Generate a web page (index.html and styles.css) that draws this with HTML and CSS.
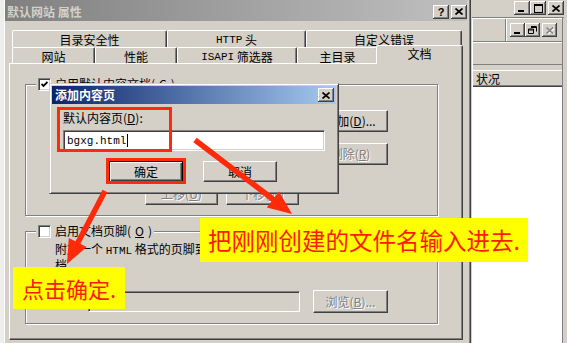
FILE: index.html
```html
<!DOCTYPE html>
<html lang="zh-CN">
<head>
<meta charset="UTF-8">
<meta name="viewport" content="width=device-width, initial-scale=1.0">
<title>默认网站 属性</title>
<link rel="stylesheet" href="styles.css">
</head>
<body>

<div class="desk">
    <div class="edge"></div>

    <div class="win">
        <div class="title">
            <span class="title-text">默认网站 属性</span>
            <span class="cap help">?</span>
            <span class="cap close"><svg width="8" height="7" viewBox="0 0 8 7"><path d="M0.5 0.5L7.5 6.5M7.5 0.5L0.5 6.5" stroke="#000" stroke-width="1.7"/></svg></span>
        </div>

        <div class="tabs">
            <div class="tab-row back">
                <div class="tab tab-sec">目录安全性</div>
                <div class="tab tab-http"><span class="m">HTTP</span>&nbsp;头</div>
                <div class="tab tab-err">自定义错误</div>
            </div>
            <div class="tab-row front">
                <div class="tab tab-site">网站</div>
                <div class="tab tab-perf">性能</div>
                <div class="tab tab-isapi"><span class="m">ISAPI</span>&nbsp;筛选器</div>
                <div class="tab tab-home">主目录</div>
                <div class="tab tab-doc on">文档</div>
            </div>
        </div>

        <div class="panel">
            <div class="group g1">
                <div class="legend">
                    <span class="check"><svg width="7" height="7" viewBox="0 0 7 7"><path d="M0.5 3L2.5 5L6.5 1" fill="none" stroke="#000" stroke-width="1.8"/></svg></span>
                    启用默认内容文档(<u>C</u>)
                </div>
                <div class="doc-row">
                    <div class="list">
                        <div>Default.htm</div>
                        <div>Default.asp</div>
                        <div>index.htm</div>
                        <div>iisstart.htm</div>
                    </div>
                    <div class="side">
                        <button class="btn">添加(<u>D</u>)...</button>
                        <button class="btn" disabled>删除(<u>R</u>)</button>
                    </div>
                </div>
                <div class="move">
                    <button class="btn" disabled>上移(<u>U</u>)</button>
                    <button class="btn" disabled>下移(<u>W</u>)</button>
                </div>
            </div>

            <div class="group g2">
                <div class="legend"><span class="check"></span>启用文档页脚(<u>O</u>)</div>
                <p class="foot-text">附加一个 <span class="m">HTML</span> 格式的页脚到您的 <span class="m">Web</span> 服务器返回的每一个文<br>档。</p>
                <div class="foot-row">
                    <div class="field off"></div>
                    <button class="btn" disabled>浏览(<u>B</u>)...</button>
                </div>
            </div>
        </div>
    </div>

    <div class="mmc">
        <div class="mmc-cap">
            <span class="cap"><span class="g-min"></span></span>
            <span class="cap"><span class="g-max"></span></span>
            <span class="cap close"><svg width="8" height="7" viewBox="0 0 8 7"><path d="M0.5 0.5L7.5 6.5M7.5 0.5L0.5 6.5" stroke="#000" stroke-width="1.7"/></svg></span>
        </div>
        <div class="mmc-body">
            <div class="mmc-menu">
                <div class="mmc-menu-left"></div>
                <div class="mdi">
                    <span class="cap small"><span class="g-min"></span></span>
                    <span class="cap small"><svg width="9" height="8" viewBox="0 0 9 8"><path d="M3 0.5H8.5V5.5M3 1.5H8.5" fill="none" stroke="#000"/><path d="M0.5 3H5.5V7.5H0.5Z M0.5 4H5.5" fill="none" stroke="#000"/></svg></span>
                    <span class="cap small close off"><svg width="8" height="7" viewBox="0 0 8 7"><path d="M1.5 1.5L8 7.5M8 1.5L1.5 7.5" stroke="#fff" stroke-width="1.5"/><path d="M0.5 0.5L7 6.5M7 0.5L0.5 6.5" stroke="#808080" stroke-width="1.5"/></svg></span>
                </div>
            </div>
            <div class="mmc-tool"></div>
            <div class="mmc-head">状况</div>
            <div class="mmc-list"></div>
        </div>
    </div>
</div>

<div class="dlg">
    <div class="dlg-title">
        <span class="dlg-name">添加内容页</span>
        <span class="cap"><svg width="8" height="7" viewBox="0 0 8 7"><path d="M0.5 0.5L7.5 6.5M7.5 0.5L0.5 6.5" stroke="#000" stroke-width="1.7"/></svg></span>
    </div>
    <div class="dlg-body">
        <div class="dlg-label">默认内容页(<u>D</u>):</div>
        <div class="field"><span class="m">bgxg.html</span><span class="caret"></span></div>
        <div class="dlg-btns">
            <button class="btn def">确定</button>
            <button class="btn">取消</button>
        </div>
    </div>
</div>

<div class="redbox rb-field"></div>
<div class="redbox rb-ok"></div>

<svg class="arrows" width="567" height="343" viewBox="0 0 567 343">
    <line x1="195" y1="140" x2="274" y2="200" stroke="#ff2a0a" stroke-width="5.5"/>
    <polygon points="292,214 266.8,207.5 279,191.5" fill="#ff2a0a"/>
    <line x1="105" y1="191" x2="77.7" y2="243" stroke="#ff2a0a" stroke-width="5.5"/>
    <polygon points="67,264 68.8,238 86.7,247" fill="#ff2a0a"/>
</svg>

<div class="note note-ok">点击确定.</div>
<div class="note note-name">把刚刚创建的文件名输入进去.</div>

</body>
</html>
```

FILE: styles.css
```css
*{
    box-sizing: border-box;
}
body{
    margin: 0;
    width: 567px;
    height: 343px;
    overflow: hidden;
    position: relative;
    background-color: #d4d0c8;
    font-family: "Noto Sans CJK SC", sans-serif;
    font-size: 12px;
    line-height: 14px;
    color: #000;
}
u{
    text-decoration-thickness: 1px;
}
.m{
    font-family: "Liberation Mono", "Noto Sans CJK SC", monospace;
    font-size: 11px;
}
.desk{
    display: flex;
    height: 343px;
}
.edge{
    width: 4px;
    background-color: #eeeeec;
}

/* properties window */
.win{
    width: 467px;
    padding: 0 4px 0 1px;
    box-shadow: inset 1px 0 #fff, inset -1px 0 #404040, inset -2px 0 #808080;
}
.title{
    height: 21px;
    display: flex;
    align-items: center;
    padding: 2px 0 0 2px;
    background: linear-gradient(to right, #808080, #c0c0c0);
    color: #d4d0c8;
    font-weight: bold;
}
.title-text{
    flex: 1;
}
.cap{
    width: 16px;
    height: 14px;
    display: flex;
    align-items: center;
    justify-content: center;
    background-color: #d4d0c8;
    box-shadow: inset -1px -1px #404040, inset 1px 1px #fff, inset -2px -2px #808080;
}
.help{
    font-family: "Liberation Sans", sans-serif;
    font-size: 11px;
    font-weight: bold;
    color: #000;
    padding-top: 1px;
}
.close{
    margin-left: 2px;
}
.g-min{
    width: 6px;
    height: 2px;
    background-color: #000;
    margin-top: 6px;
    margin-right: 2px;
}
.g-max{
    width: 9px;
    height: 9px;
    border: 1px solid #000;
    border-top-width: 2px;
}

/* tabs */
.tabs{
    margin: 9px 0 0 7px;
    width: 450px;
}
.tab-row{
    display: flex;
}
.tab{
    display: flex;
    align-items: center;
    justify-content: center;
    border-top: 1px solid #fff;
    border-left: 1px solid #fff;
    border-right: 1px solid #404040;
    border-radius: 2px 2px 0 0;
    box-shadow: inset -1px 0 #808080;
    padding-top: 2px;
    white-space: nowrap;
}
.back .tab{
    height: 17px;
}
.front .tab{
    height: 16px;
}
.tab-sec{ width: 155px; }
.tab-http{ width: 139px; }
.tab-err{ width: 156px; }
.tab-site{ width: 83px; }
.tab-perf{ width: 82px; }
.tab-isapi{ width: 120px; }
.tab-home{ width: 81px; }
.tab-doc{ width: 84px; }
.tab.on{
    width: 87px;
    height: 19px;
    margin: -2px -1px -1px -2px;
    padding: 0 0 2px 0;
    position: relative;
    z-index: 1;
    background-color: #d4d0c8;
}

.panel{
    margin-left: 4px;
    width: 454px;
    height: 277px;
    padding-left: 15px;
    border-top: 1px solid #fff;
    border-left: 1px solid #fff;
    border-right: 1px solid #404040;
    border-bottom: 1px solid #404040;
    box-shadow: inset -1px -1px #808080;
}
.group{
    width: 413px;
    border: 1px solid #808080;
    box-shadow: inset 1px 1px #fff, 1px 1px #fff;
}
.g1{
    margin-top: 20px;
    height: 132px;
}
.g2{
    margin-top: 15px;
    height: 93px;
}
.legend{
    display: flex;
    align-items: center;
    gap: 4px;
    width: fit-content;
    height: 14px;
    margin: -8px 0 0 10px;
    padding: 0 2px;
    background-color: #d4d0c8;
}
.check{
    width: 13px;
    height: 13px;
    display: flex;
    align-items: center;
    justify-content: center;
    background-color: #fff;
    border: 1px solid;
    border-color: #808080 #fff #fff #808080;
    box-shadow: inset 1px 1px #404040, inset -1px -1px #d4d0c8;
}
.doc-row{
    display: flex;
    margin: 9px 0 0 24px;
}
.list{
    width: 250px;
    height: 75px;
    padding: 3px 4px;
    background-color: #fff;
    border: 1px solid;
    border-color: #808080 #fff #fff #808080;
    box-shadow: inset 1px 1px #404040, inset -1px -1px #d4d0c8;
}
.side{
    display: flex;
    flex-direction: column;
    gap: 11px;
    margin-left: 13px;
    padding-top: 10px;
}
.side .btn{
    height: 22px;
}
.move{
    display: flex;
    gap: 8px;
    margin: 7px 0 0 119px;
}
.move .btn{
    width: 73px;
}
.foot-text{
    margin: 4px 0 0 29px;
    line-height: 13px;
    white-space: nowrap;
}
.foot-row{
    display: flex;
    align-items: center;
    margin: 19px 0 0 62px;
}
.foot-row .btn{
    margin-left: 13px;
}

/* buttons and fields */
.btn{
    width: 75px;
    height: 23px;
    padding: 0;
    font: inherit;
    color: #000;
    background-color: #d4d0c8;
    border: 1px solid;
    border-color: #fff #404040 #404040 #fff;
    box-shadow: inset -1px -1px #808080;
}
.btn:disabled{
    color: #808080;
    text-shadow: 1px 1px #fff;
}
.btn.def{
    border-color: #000;
    box-shadow: inset 1px 1px #fff, inset -1px -1px #404040, inset -2px -2px #808080;
}
.field{
    display: flex;
    align-items: center;
    height: 21px;
    padding-left: 3px;
    background-color: #fff;
    border: 1px solid;
    border-color: #808080 #fff #fff #808080;
    box-shadow: inset 1px 1px #404040, inset -1px -1px #d4d0c8;
}
.field.off{
    width: 212px;
    background-color: #d4d0c8;
}
.caret{
    width: 1px;
    height: 13px;
    margin-left: 1px;
    background-color: #000;
}

/* console window behind */
.mmc{
    flex: 1;
    display: flex;
    flex-direction: column;
    padding: 0 4px 0 1px;
}
.mmc-cap{
    height: 18px;
    display: flex;
    justify-content: flex-end;
    align-items: flex-start;
    padding-top: 1px;
    margin-right: -1px;
    border-bottom: 1px solid #808080;
}
.mmc-body{
    flex: 1;
    display: flex;
    flex-direction: column;
    border-left: 1px solid #fff;
    border-right: 1px solid #808080;
}
.mmc-menu{
    height: 24px;
    display: flex;
    border-top: 1px solid #fff;
    border-bottom: 1px solid #808080;
}
.mmc-menu-left{
    width: 33px;
    border-right: 1px solid #808080;
    box-shadow: 1px 0 #fff;
}
.mdi{
    display: flex;
    margin: 4px 0 0 4px;
}
.cap.small{
    width: 15px;
}
.mmc-tool{
    height: 23px;
    border-top: 1px solid #fff;
    border-bottom: 1px solid #808080;
    margin-bottom: 5px;
}
.mmc-head{
    height: 17px;
    padding: 1px 0 0 3px;
    border-top: 1px solid #fff;
    border-bottom: 1px solid #404040;
    box-shadow: inset 0 -1px #808080;
}
.mmc-list{
    flex: 1;
    background-color: #fff;
}

/* dialog */
.dlg{
    position: absolute;
    left: 49px;
    top: 83px;
    width: 290px;
    height: 111px;
    padding: 2px;
    background-color: #d4d0c8;
    border: 1px solid;
    border-color: #d4d0c8 #404040 #404040 #d4d0c8;
    box-shadow: inset 1px 1px #fff, inset -1px -1px #808080;
}
.dlg-title{
    height: 18px;
    display: flex;
    align-items: center;
    padding: 0 2px 0 3px;
    background: linear-gradient(to right, #0a246a, #a6caf0);
    color: #fff;
    font-weight: bold;
}
.dlg-name{
    flex: 1;
}
.dlg-body{
    padding: 7px 0 0 11px;
}
.dlg-body .field{
    width: 262px;
    margin-top: 5px;
}
.dlg-btns{
    display: flex;
    gap: 20px;
    margin: 10px 0 0 46px;
}
.dlg-btns .btn{
    width: 74px;
    height: 21px;
}

/* annotations */
.redbox{
    position: absolute;
    border: 3px solid #ff2a0a;
}
.rb-field{
    left: 57px;
    top: 107px;
    width: 115px;
    height: 45px;
}
.rb-ok{
    left: 106px;
    top: 158px;
    width: 80px;
    height: 26px;
}
.arrows{
    position: absolute;
    left: 0;
    top: 0;
}
.note{
    position: absolute;
    display: flex;
    align-items: center;
    background-color: #ffff00;
    color: #ff1a00;
    white-space: nowrap;
}
.note-ok{
    left: 13px;
    top: 267px;
    width: 112px;
    height: 42px;
    padding-left: 9px;
    font-size: 22px;
}
.note-name{
    left: 200px;
    top: 218px;
    width: 328px;
    height: 44px;
    padding-left: 8px;
    font-size: 23.5px;
}
```
